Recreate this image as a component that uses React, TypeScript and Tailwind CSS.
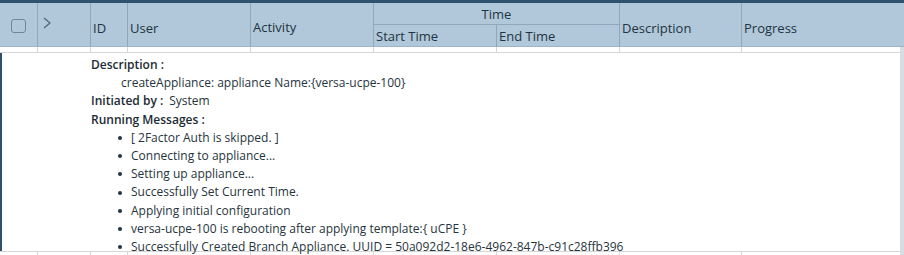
const cols = [38, 53, 37, 123, 123, 123, 123, 122, 158];

const messages = [
  "[ 2Factor Auth is skipped. ]",
  "Connecting to appliance...",
  "Setting up appliance...",
  "Successfully Set Current Time.",
  "Applying initial configuration",
  "versa-ucpe-100 is rebooting after applying template:{ uCPE }",
  "Successfully Created Branch Appliance. UUID = 50a092d2-18e6-4962-847b-c91c28ffb396",
];

function RowLines({ h }: { h: string }) {
  return (
    <div className={`flex ${h}`}>
      {cols.map((w, i) => (
        <div
          key={i}
          className={i < cols.length - 1 ? "border-r border-[#d6d6d6] shrink-0" : "flex-1"}
          style={{ width: i < cols.length - 1 ? w : undefined }}
        />
      ))}
    </div>
  );
}

export default function App() {
  return (
    <div
      className="w-[904px] h-[255px] overflow-hidden bg-white text-[#26343d]"
      style={{ fontFamily: '"Open Sans", "Noto Sans", sans-serif' }}
    >
      <div className="h-[3px] bg-[#2e526d]" />
      <div className="flex h-[44px] bg-[#b0c8d9] text-[13px] text-[#1f3442] border-b border-[#9db5c5]">
        <div className="w-[38px] shrink-0 border-r border-[#8fa8b8] flex items-center justify-center">
          <div className="w-[15px] h-[14px] rounded-[3px] border border-[#6f8697] mt-[3px]" />
        </div>
        <div className="w-[53px] shrink-0 border-r border-[#8fa8b8] pl-[4px] pt-[14px]">
          <svg width="10" height="12" viewBox="0 0 10 12">
            <path d="M2 1 L8 6 L2 11" fill="none" stroke="#4d6677" strokeWidth="1.2" />
          </svg>
        </div>
        <div className="w-[37px] shrink-0 border-r border-[#8fa8b8] pl-[2px] pt-[16px]">ID</div>
        <div className="w-[123px] shrink-0 border-r border-[#8fa8b8] pl-[2px] pt-[16px]">User</div>
        <div className="w-[123px] shrink-0 border-r border-[#8fa8b8] pl-[2px] pt-[15px]">Activity</div>
        <div className="w-[246px] shrink-0 border-r border-[#8fa8b8] flex flex-col">
          <div className="h-[22px] border-b border-[#8fa8b8] flex items-center justify-center pt-[2px]">Time</div>
          <div className="flex flex-1">
            <div className="w-[123px] border-r border-[#8fa8b8] pl-[2px] pt-[2px]">Start Time</div>
            <div className="flex-1 pl-[2px] pt-[2px]">End Time</div>
          </div>
        </div>
        <div className="w-[122px] shrink-0 border-r border-[#8fa8b8] pl-[2px] pt-[16px]">Description</div>
        <div className="flex-1 pl-[2px] pt-[16px]">Progress</div>
      </div>
      <div className="flex">
        <div className="flex-1">
          <div className="border-b border-[#d6d6d6]">
            <RowLines h="h-[5px]" />
          </div>
          <div className="border-l-2 border-[#2e526d] h-[198px] pl-[89px] pt-[3px] text-[12px] leading-[18.2px]">
            <div className="font-semibold text-[#1c2b34]">Description :</div>
            <div className="pl-[30px]">createAppliance: appliance Name:{"{versa-ucpe-100}"}</div>
            <div>
              <span className="font-semibold text-[#1c2b34]">Initiated by :</span>
              <span className="ml-[6px]">System</span>
            </div>
            <div className="font-semibold text-[#1c2b34]">Running Messages :</div>
            <ul className="pl-[27px]">
              {messages.map((m) => (
                <li key={m} className="flex items-center">
                  <span className="w-[4px] h-[4px] rounded-full bg-[#1f3442] mr-[9px] shrink-0" />
                  <span className="whitespace-nowrap">{m}</span>
                </li>
              ))}
            </ul>
          </div>
          <div className="border-t border-[#d6d6d6]">
            <RowLines h="h-[4px]" />
          </div>
        </div>
        <div className="w-[4px] bg-[#d5dde2]" />
      </div>
    </div>
  );
}
